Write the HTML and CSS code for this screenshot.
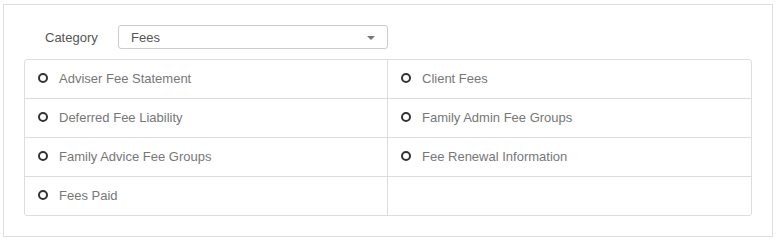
FILE: index.html
```html
<!DOCTYPE html>
<html lang="en">
<head>
    <meta charset="UTF-8">
    <title>Report Category</title>
    <link rel="stylesheet" href="styles.css">
</head>
<body>
    <div class="panel">
        <div class="filter-row">
            <label class="filter-label" for="category">Category</label>
            <div class="select">
                <span class="select-value">Fees</span>
                <span class="caret"></span>
            </div>
        </div>
        <div class="report-list">
            <div class="report-item"><span class="radio"></span>Adviser Fee Statement</div>
            <div class="report-item"><span class="radio"></span>Client Fees</div>
            <div class="report-item"><span class="radio"></span>Deferred Fee Liability</div>
            <div class="report-item"><span class="radio"></span>Family Admin Fee Groups</div>
            <div class="report-item"><span class="radio"></span>Family Advice Fee Groups</div>
            <div class="report-item"><span class="radio"></span>Fee Renewal Information</div>
            <div class="report-item"><span class="radio"></span>Fees Paid</div>
            <div class="report-item"></div>
        </div>
    </div>
</body>
</html>
```

FILE: styles.css
```css
* {
    margin: 0;
    padding: 0;
    box-sizing: border-box;
}

body {
    font-family: 'Liberation Sans', Arial, sans-serif;
    font-size: 13px;
    background: #fff;
    padding: 4px 6px 4px 3px;
}

.panel {
    width: 770px;
    height: 233px;
    border: 1px solid #ddd;
    padding: 20px 20px 0 20px;
}

.filter-row {
    display: flex;
    align-items: center;
    height: 24px;
    margin-bottom: 10px;
}

.filter-label {
    color: #555;
    width: 94px;
    padding-left: 21px;
}

.select {
    width: 270px;
    height: 24px;
    border: 1px solid #ccc;
    border-radius: 3px;
    display: flex;
    align-items: center;
    justify-content: space-between;
    padding: 0 12px 0 12px;
    color: #555;
}

.caret {
    width: 0;
    height: 0;
    border-left: 4px solid transparent;
    border-right: 4px solid transparent;
    border-top: 4px solid #777;
    margin-top: 2px;
}

.report-list {
    display: grid;
    grid-template-columns: 363px 1fr;
    width: 728px;
    border: 1px solid #ddd;
    border-radius: 3px;
}

.report-item {
    display: flex;
    align-items: center;
    height: 39px;
    padding: 0 0 2px 13px;
    color: #777;
    border-bottom: 1px solid #ddd;
}

.report-item:nth-child(odd) {
    border-right: 1px solid #ddd;
}

.report-item:nth-last-child(-n+2) {
    border-bottom: none;
    height: 38px;
}

.radio {
    width: 10px;
    height: 10px;
    border: 2px solid #333;
    border-radius: 50%;
    margin-right: 11px;
}
```
